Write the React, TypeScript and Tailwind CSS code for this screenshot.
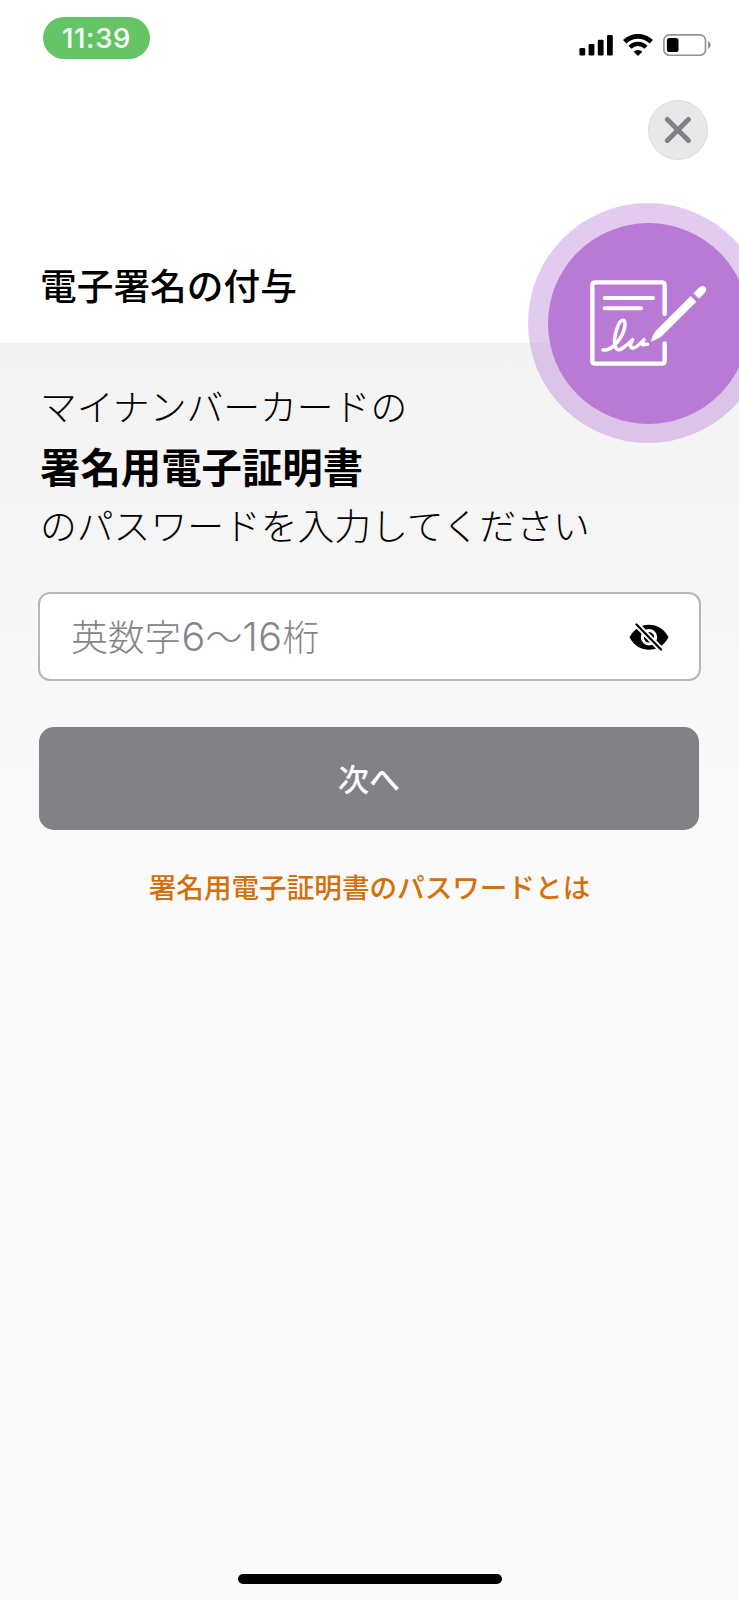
import React, { useState } from 'react';

const SignalIcon: React.FC = () => (
  <svg width="34" height="22" viewBox="0 0 34 22" fill="#000">
    <rect x="0.4" y="14" width="5.8" height="7.6" rx="1.3" />
    <rect x="9.6" y="10" width="5.8" height="11.6" rx="1.3" />
    <rect x="18.8" y="5.7" width="5.8" height="15.9" rx="1.3" />
    <rect x="28" y="1" width="5.8" height="20.6" rx="1.3" />
  </svg>
);

const WifiIcon: React.FC = () => (
  <svg width="30" height="22" viewBox="0 0 30 22" fill="none">
    <path d="M1.7 7.8a18.8 18.8 0 0 1 26.6 0" stroke="#000" strokeWidth="4.8" />
    <path d="M7 13.2a11.4 11.4 0 0 1 16 0" stroke="#000" strokeWidth="4.4" />
    <path d="M15 21.9l-4.300-4.100a6.200 6.200 0 0 1 8.600 0z" fill="#000" />
  </svg>
);

const BatteryIcon: React.FC = () => (
  <svg width="48" height="22" viewBox="0 0 48 22" fill="none">
    <rect x="0.9" y="0.9" width="41.6" height="20.4" rx="5.4" stroke="#949494" strokeWidth="1.7" />
    <rect x="3.9" y="4" width="11.6" height="14" rx="2.6" fill="#000" />
    <path d="M45 7.3c3.6 1 3.6 6.6 0 7.6z" fill="#949494" />
  </svg>
);

const CloseIcon: React.FC = () => (
  <svg width="28" height="28" viewBox="0 0 28 28" fill="none" stroke="#828186" strokeWidth="5" strokeLinecap="round">
    <path d="M3.4 3.4l21 21M24.4 3.4l-21 21" />
  </svg>
);

const SignIcon: React.FC = () => (
  <svg width="120" height="90" viewBox="207 264 360 270" fill="none" stroke="#fff" strokeLinecap="round" strokeLinejoin="round">
    <path d="M437 372V286q0-9-9-9H229q-9 0-9 9V512q0 9 9 9H428q9 0 9-9V460" strokeWidth="13" />
    <path d="M257 324H402M257 355H366" strokeWidth="12" />
    <path
      d="M252 480C276 483 300 456 313 426C320 409 320 391 311 391C298 391 284 441 287 463C289 479 299 482 307 477C322 468 331 460 341 449C334 460 332 474 341 474C352 475 362 462 375 449C369 460 369 466 375 464C379 462 380 462 386 463"
      strokeWidth="10.5"
    />
    <path d="M396 455C401 433 409 424 418 415L515 318L532 335L435 432C426 441 415 449 396 455Z" fill="#fff" stroke="none" />
    <path d="M523 310L540 293C547 286 554 287 558 291C564 296 562 303 557 309L540 326Z" fill="#fff" stroke="none" />
  </svg>
);

const EyeOffIcon: React.FC = () => (
  <svg width="40" height="28" viewBox="0 0 40 28" fill="none">
    <path d="M0.5 14.2C5 6 12 1.7 20 1.7s15 4 19.5 12.5C35 22.7 28 26.7 20 26.7S5 22.7 0.5 14.2z" fill="#000" />
    <circle cx="20" cy="14.2" r="6.7" stroke="#fff" strokeWidth="3" />
    <path d="M7.5 1.5L32 26.5" stroke="#fff" strokeWidth="6" />
    <path d="M7.5 1.5L32 26.5" stroke="#000" strokeWidth="2.2" strokeLinecap="round" />
  </svg>
);

const StatusBar: React.FC = () => (
  <div className="flex items-start justify-between pl-[43px] pr-[28px] pt-[17px]">
    <div className="flex h-[42px] w-[107px] items-center justify-center rounded-full bg-[#65c466] pt-[2px] font-['Inter',sans-serif] text-[27.5px] font-medium leading-none tracking-[0.7px] text-white">
      11:39
    </div>
    <div className="flex items-center pt-[17px]">
      <SignalIcon />
      <div className="ml-[10px]">
        <WifiIcon />
      </div>
      <div className="ml-[10px]">
        <BatteryIcon />
      </div>
    </div>
  </div>
);

export default function App() {
  const [isHidden, setIsHidden] = useState(true);

  return (
    <div className="flex h-[1600px] w-[739px] flex-col overflow-hidden bg-[#fafafa] font-['Noto_Sans_CJK_JP',sans-serif] text-black">
      <header className="relative flex h-[343px] shrink-0 flex-col bg-white">
        <StatusBar />
        <div className="flex justify-end pr-[31px] pt-[41px]">
          <button aria-label="閉じる" className="flex h-[60px] w-[60px] items-center justify-center rounded-full border border-[#dcdcdc] bg-[#e8e8e8]">
            <CloseIcon />
          </button>
        </div>
        <h1 className="mt-[97px] pl-[40px] text-[36.7px] font-medium leading-[54px]">電子署名の付与</h1>

        {/* badge hangs over the right edge and the panel below */}
        <div className="absolute left-[528px] top-[203px] flex h-[240px] w-[240px] items-center justify-center rounded-full bg-[#b97ad6]/40">
          <div className="flex h-[201px] w-[201px] shrink-0 items-center justify-center rounded-full bg-[#b97ad6]">
            <SignIcon />
          </div>
        </div>
      </header>

      <main className="flex flex-1 flex-col bg-[linear-gradient(#f3f3f3,#fafafa_500px)] px-[38px]">
        <div className="flex flex-col pl-[2px] pt-[32px] text-[36.8px] font-light leading-[60px]">
          <p>マイナンバーカードの</p>
          <p className="pt-px text-[40.4px] font-bold">署名用電子証明書</p>
          <p className="leading-[57px]">のパスワードを入力してください</p>
        </div>

        <div className="mt-[39px] flex h-[89px] items-center justify-between rounded-[12px] border-2 border-[#b7b7b8] bg-white pl-[31px] pr-[30px]">
          <span className="flex items-center pb-[3px] text-[36.8px] font-light leading-[54px] text-[#868589]">
            英数字
            <span className="pt-[3px] font-['Inter',sans-serif] text-[39.5px] font-[350] tracking-[0.4px]">6</span>
            〜
            <span className="pt-[3px] font-['Inter',sans-serif] text-[39.5px] font-[350] tracking-[0.4px]">16</span>
            桁
          </span>
          <button aria-label="パスワードを表示" onClick={() => setIsHidden(!isHidden)}>
            <EyeOffIcon />
          </button>
        </div>

        <button className="ml-[1px] mr-[2px] mt-[46px] flex h-[103px] items-center justify-center rounded-[15px] bg-[#828186] text-[31px] font-medium text-white">
          次へ
        </button>

        <a className="mt-[36px] text-center text-[27.6px] font-medium leading-[40px] text-[#d46f0a]">
          署名用電子証明書のパスワードとは
        </a>

        <div className="mb-[16px] mt-auto h-[10px] w-[264px] self-center rounded-full bg-black" />
      </main>
    </div>
  );
}
